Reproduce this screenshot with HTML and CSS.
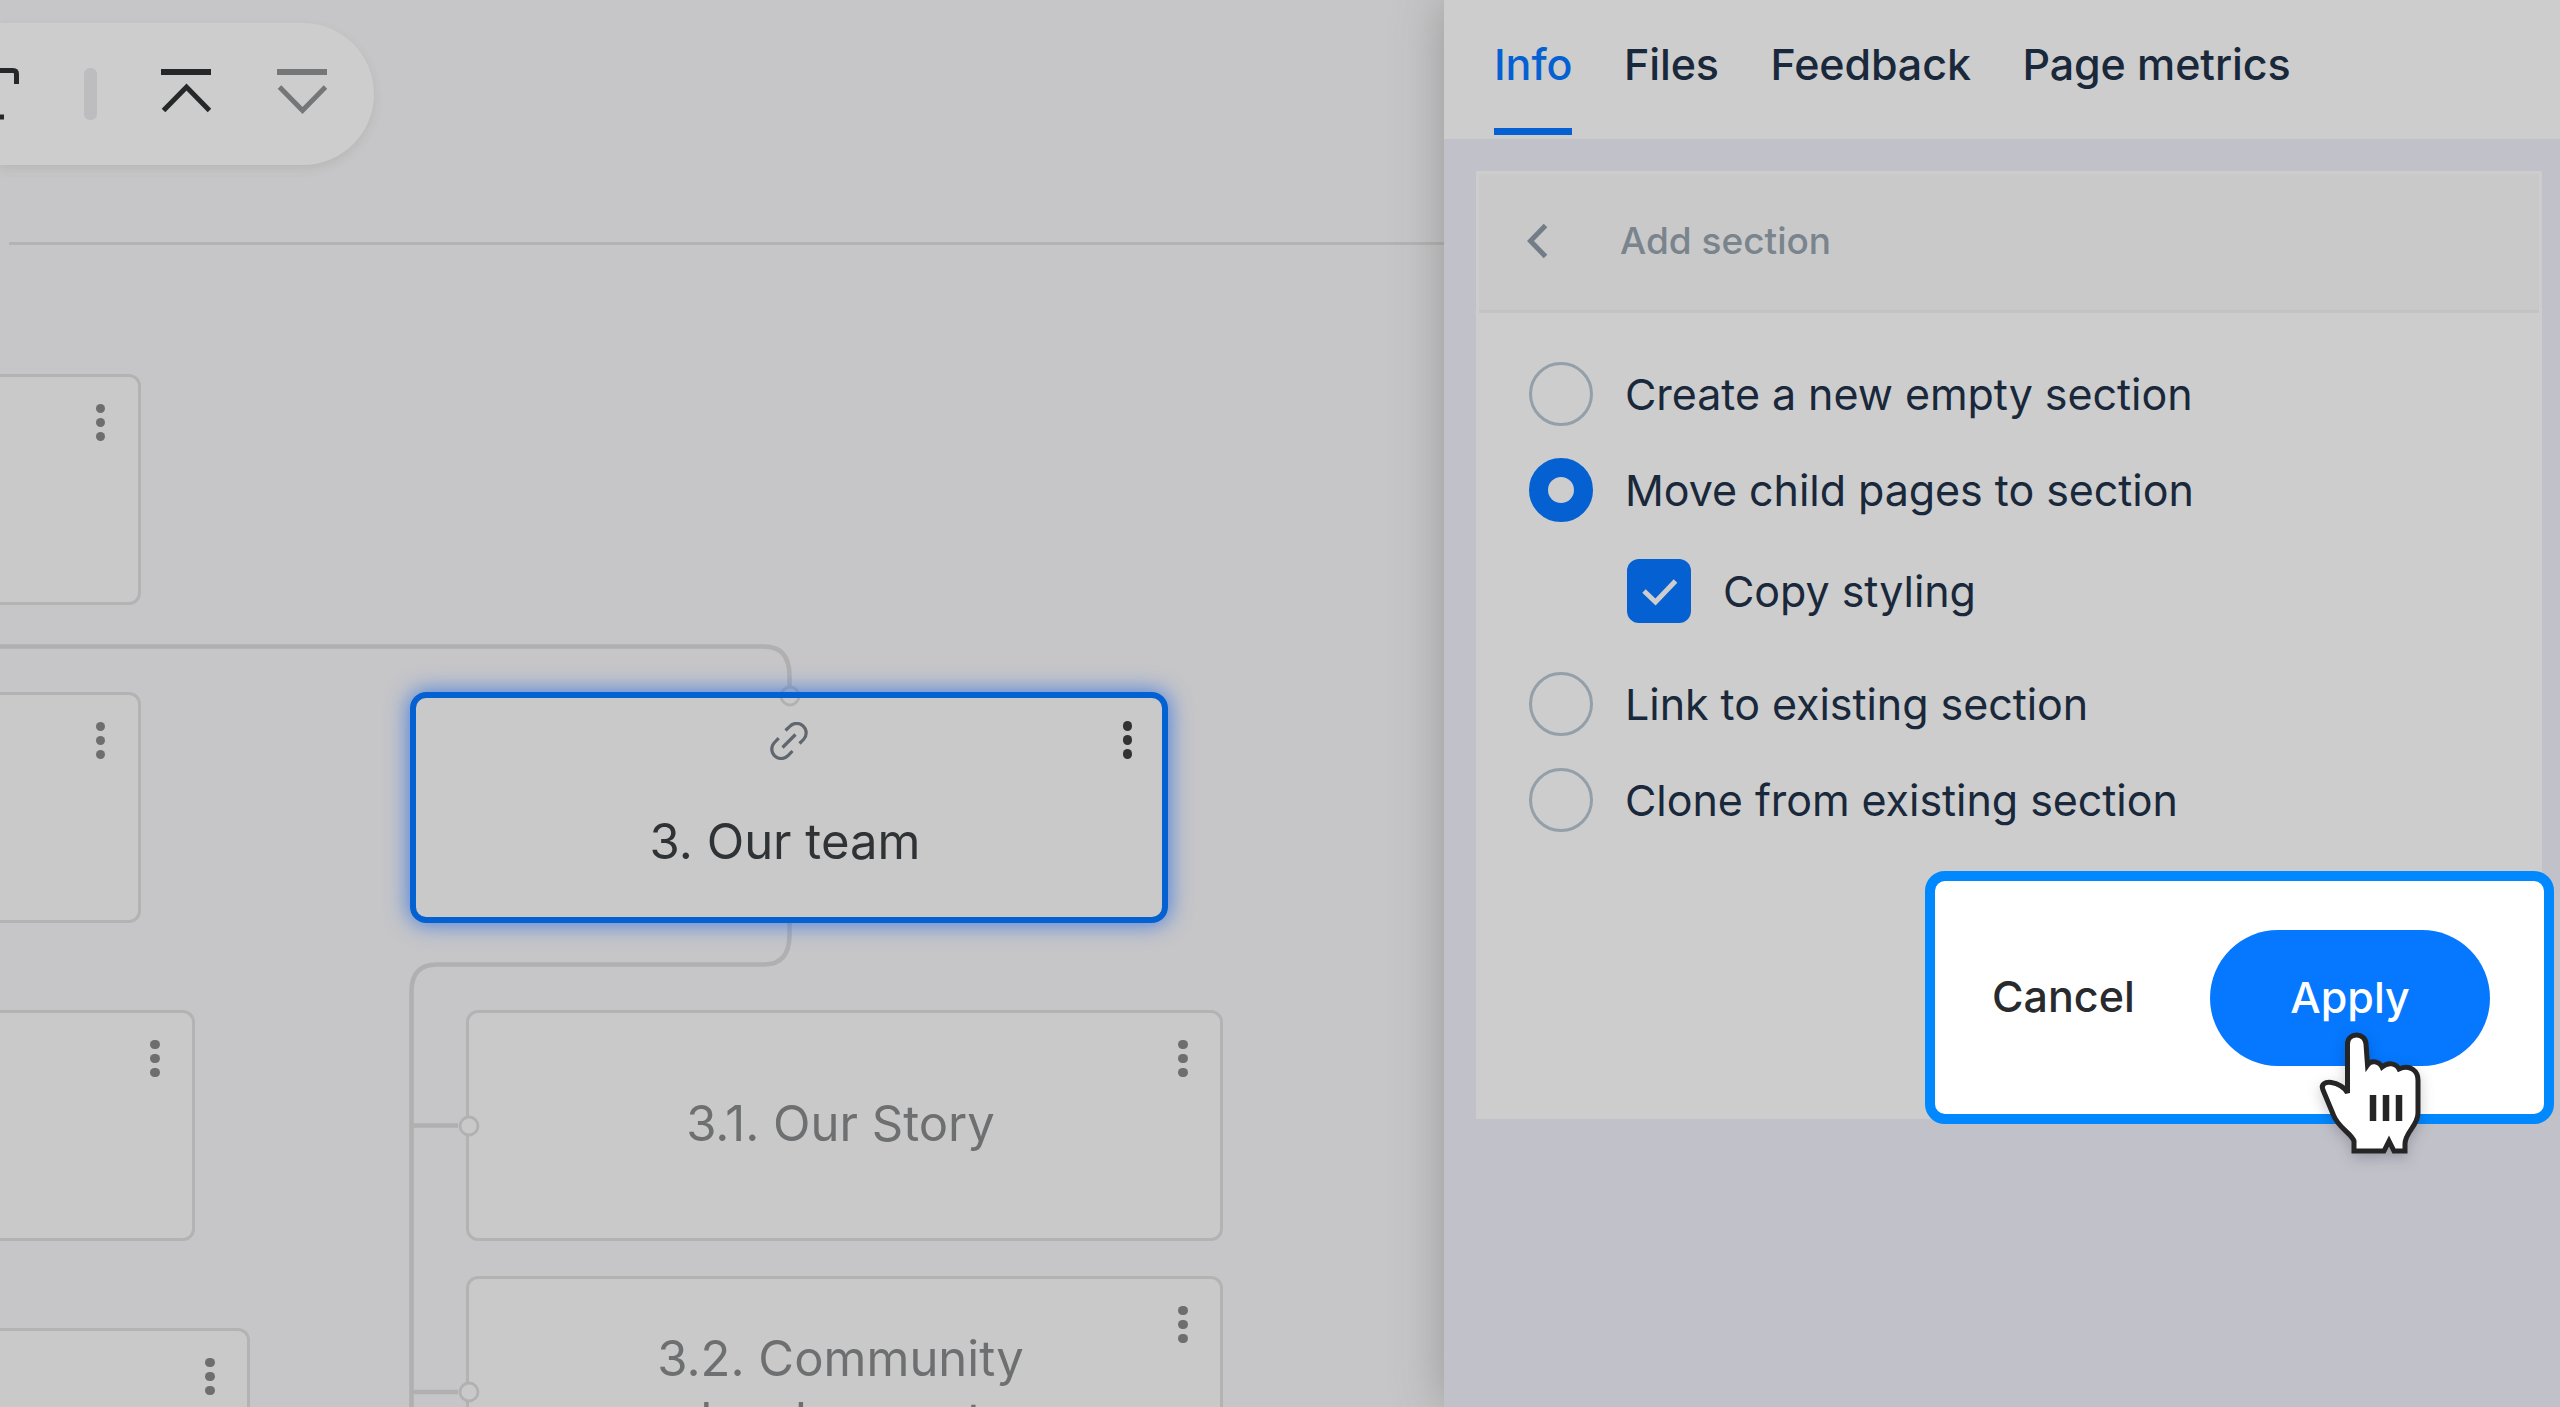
FILE: index.html
```html
<!DOCTYPE html>
<html lang="en">
<head>
<meta charset="utf-8">
<title>Sitemap editor</title>
<link rel="stylesheet" href="styles.css">
</head>
<body>
<main class="canvas">
  <svg class="links" width="1444" height="1407" viewBox="0 0 1444 1407">
    <path class="rule" d="M9 243.5H1444"/>
    <path class="wire" d="M0 646.5H764Q789.5 646.5 789.5 676V686"/>
    <path class="wire" d="M789.5 922V935Q789.5 964.5 764 964.5H437Q411.500 964.500 411.500 991V1407M411.500 1125.500H458M411.500 1392H458"/>
  </svg>

  <div class="toolbar">
    <svg class="tool-text" width="20" height="60" viewBox="0 0 20 60"><path d="M0 6.500H13Q16.500 6.500 16.500 10V20M0 53H4"/></svg>
    <span class="tool-divider"></span>
    <svg class="tool-up" width="50" height="52" viewBox="0 0 50 52"><path class="bar" d="M0 4H50"/><path d="M2.500 42.500L25.500 19L48.500 42.500"/></svg>
    <svg class="tool-down" width="50" height="52" viewBox="0 0 50 52"><path class="bar" d="M0 4H50"/><path d="M2.500 19L25.500 42.500L48.500 19"/></svg>
  </div>

  <article class="node node-a"><span class="dots"><i></i><i></i><i></i></span></article>
  <article class="node node-b"><span class="dots"><i></i><i></i><i></i></span></article>
  <article class="node node-c"><span class="dots"><i></i><i></i><i></i></span></article>
  <article class="node node-d"><span class="dots"><i></i><i></i><i></i></span></article>

  <article class="node node-team">
    <svg class="port port-top" width="24" height="24" viewBox="0 0 24 24"><circle cx="12" cy="12" r="9"/></svg>
    <svg class="chain" width="38" height="38" viewBox="0 0 38 38"><path d="M15.500 8.500L19.800 4.300A9.400 9.400 0 0 1 33.500 17.500L29.500 21.500M22.500 29L18 33.700A9.400 9.400 0 0 1 4.500 20.500L8.700 16.200M12.500 25.500L25.500 12.500"/></svg>
    <span class="dots"><i></i><i></i><i></i></span>
    <h2>3. Our team</h2>
  </article>

  <article class="node node-story">
    <svg class="port port-left" width="24" height="24" viewBox="0 0 24 24"><circle cx="12" cy="12" r="9"/></svg>
    <span class="dots"><i></i><i></i><i></i></span>
    <h2>3.1. Our Story</h2>
  </article>
  <article class="node node-community">
    <svg class="port port-left" width="24" height="24" viewBox="0 0 24 24"><circle cx="12" cy="12" r="9"/></svg>
    <span class="dots"><i></i><i></i><i></i></span>
    <h2>3.2. Community<br><span class="second-line">development</span></h2>
  </article>
</main>

<aside class="panel">
  <nav class="tabs">
    <a class="tab active">Info</a>
    <a class="tab">Files</a>
    <a class="tab">Feedback</a>
    <a class="tab">Page metrics</a>
  </nav>
  <section class="card">
    <header class="card-head">
      <svg class="back" width="22" height="38" viewBox="0 0 22 38"><path d="M18.500 3.500L3.500 19L18.500 34.500"/></svg>
      <span class="card-title">Add section</span>
    </header>
    <div class="options">
      <label class="option"><span class="radio"></span>Create a new empty section</label>
      <label class="option"><span class="radio checked"></span>Move child pages to section</label>
      <label class="option nested"><span class="check"><svg width="64" height="64" viewBox="0 0 64 64"><path d="M17 32L28.500 43L48.500 22"/></svg></span>Copy styling</label>
      <label class="option"><span class="radio"></span>Link to existing section</label>
      <label class="option"><span class="radio"></span>Clone from existing section</label>
    </div>
  </section>
</aside>

<div class="actions">
  <button class="cancel">Cancel</button>
  <button class="apply">Apply</button>
</div>

<svg class="pointer" width="140" height="160" viewBox="0 0 140 160">
  <path class="hand" d="M47.500 93V44C47.500 32 65.500 32 66 44L67.500 65C71 60 79 61 82 67C88 62 96 63 99 69C110 64 118 71 118 80V113C118 126 105 132 105 144V151H94L89 141L84 151H54V141C51 133 38 128 33 114L23 90C18 78 42 81 47.500 93Z"/>
  <path class="crease" d="M73 95V121M86 95V121M99 95V121"/>
</svg>
</body>
</html>
```

FILE: styles.css
```css
* { box-sizing: border-box; }

body {
  margin: 0;
  width: 2560px;
  height: 1407px;
  overflow: hidden;
  position: relative;
  display: flex;
  background: #c6c6c8;
  font-family: Inter, "Liberation Sans", sans-serif;
  white-space: nowrap;
}

svg { display: block; fill: none; }

/* Sitemap canvas */
.canvas { position: relative; width: 1444px; height: 1407px; flex: none; overflow: hidden; }
.links { position: absolute; inset: 0; }
.rule { stroke: #b3b3b3; stroke-width: 3; }
.wire { stroke: #b0b0b0; stroke-width: 4.500; }

.toolbar {
  position: relative;
  width: 374px;
  height: 142px;
  margin-top: 23px;
  display: flex;
  align-items: center;
  background: #cdcdcd;
  border-radius: 0 71px 71px 0;
  box-shadow: 0 4px 10px rgba(110, 110, 100, .16);
}
.toolbar path { stroke: #252728; stroke-width: 5; }
.toolbar .bar { stroke-width: 6; }
.tool-divider { width: 13px; height: 52px; margin: 0 64px; border-radius: 6px; background: #bdbdbf; }
.tool-down { margin-left: 66px; }
.toolbar .tool-down path { stroke: #757677; }

.node {
  position: absolute;
  height: 231px;
  background: #c9c9c9;
  border: 3px solid #b3b3b3;
  border-radius: 12px;
  display: flex;
  justify-content: center;
  align-items: center;
}
.node-a, .node-b { left: -620px; width: 760.500px; }
.node-a { top: 374px; }
.node-b { top: 692px; }
.node-c { left: -562px; top: 1010px; width: 757px; }
.node-d { left: -507px; top: 1328px; width: 757px; }
.node-story, .node-community { left: 466px; width: 757px; }
.node-story { top: 1010px; }
.node-community { top: 1276px; }
.node-team {
  left: 410px; top: 692px; width: 758px;
  border: 6px solid transparent;
  border-radius: 16px;
}
/* selection frame, drawn over the connector port */
.node-team::after {
  content: "";
  position: absolute;
  inset: -6px;
  border: 6px solid #0461d1;
  border-radius: 16px;
  box-shadow: 0 0 22px 1px rgba(30, 100, 230, .75);
}

.dots { position: absolute; top: 26.500px; right: 32.500px; display: grid; gap: 4.500px; }
.dots i { width: 9.500px; height: 9.500px; border-radius: 50%; background: #6e6e6e; }
.node-team .dots { top: 23px; right: 30px; }
.node-team .dots i { background: #333; }

.node h2 { margin: 0 8px 3px 0; font-size: 49px; font-weight: 400; line-height: 62px; text-align: center; color: #6e6f70; }
.node-team h2 { margin: 69px 8px 0 0; color: #303335; }
.second-line { margin-right: 16px; }

.chain { position: absolute; top: 24px; left: 354px; }
.chain path { stroke: #5f666d; stroke-width: 3.200; }
.port { position: absolute; }
.port circle { fill: #c9c9c9; stroke: #b1b1b1; stroke-width: 2.800; }
.port-left { left: -12.500px; top: 100.500px; }
.port-top { left: 361.500px; top: -14.500px; }

/* Side panel */
.panel {
  position: relative;
  flex: 1;
  background: #c1c2c9;
  box-shadow: 0 0 46px rgba(90, 90, 85, .42);
}
.tabs { height: 139px; padding: 0 50px; display: flex; gap: 51.600px; background: #cdcdcd; }
.tab { height: 135px; padding-top: 38px; font-size: 43px; font-weight: 500; line-height: 52px; letter-spacing: -.1px; color: #19283a; }
.tab.active { color: #0561d2; border-bottom: 7px solid #0561d2; }

.card { width: 1066px; height: 948px; margin: 32px 0 0 32px; background: #cdcdcd; }
.card-head {
  height: 142px;
  margin: 0 3px;
  padding: 0 0 2px 48px;
  display: flex;
  align-items: center;
  gap: 71px;
  background: #c9c9c9;
  border-top: 3px solid #cdcdcd;
  border-bottom: 3px solid #c3c3c3;
  color: #7a848d;
  font-size: 37px;
  font-weight: 500;
}
.card-title { padding-bottom: 2px; }
.back path { stroke: #737d87; stroke-width: 5; }

.options { padding: 49px 53px; display: flex; flex-direction: column; gap: 32px; }
.option { height: 64px; display: flex; align-items: center; gap: 32px; font-size: 43px; line-height: 52px; letter-spacing: -.05px; color: #19283a; }
.nested { margin: 5px 0 17px 98px; }
.radio { width: 64px; height: 64px; border: 3px solid #939fa9; border-radius: 50%; }
.radio.checked { border: 19px solid #0561d2; }
.check { width: 64px; height: 64px; border-radius: 12px; background: #0561d2; }
.check path { stroke: #cdcdcd; stroke-width: 5; }

/* Highlighted confirm bar */
.actions {
  position: absolute;
  left: 1925px; top: 871px;
  width: 629px; height: 253px;
  padding: 1px 54px 0 57px;
  display: flex;
  justify-content: space-between;
  align-items: center;
  background: #fff;
  border: 10.500px solid #08f;
  border-radius: 20px;
}
.actions button { border: 0; padding: 0 0 5px; background: none; font: 500 43px/52px Inter, "Liberation Sans", sans-serif; color: #282a2d; }
.actions .apply { width: 280px; height: 136px; padding-bottom: 2px; border-radius: 68px; background: #0578ff; color: #fff; }

.pointer { position: absolute; left: 2299.500px; top: 1000px; filter: drop-shadow(0 5px 7px rgba(0, 0, 30, .2)); }
.hand { fill: #fff; stroke: #252525; stroke-width: 5; }
.crease { stroke: #252525; stroke-width: 6.500; }
```
